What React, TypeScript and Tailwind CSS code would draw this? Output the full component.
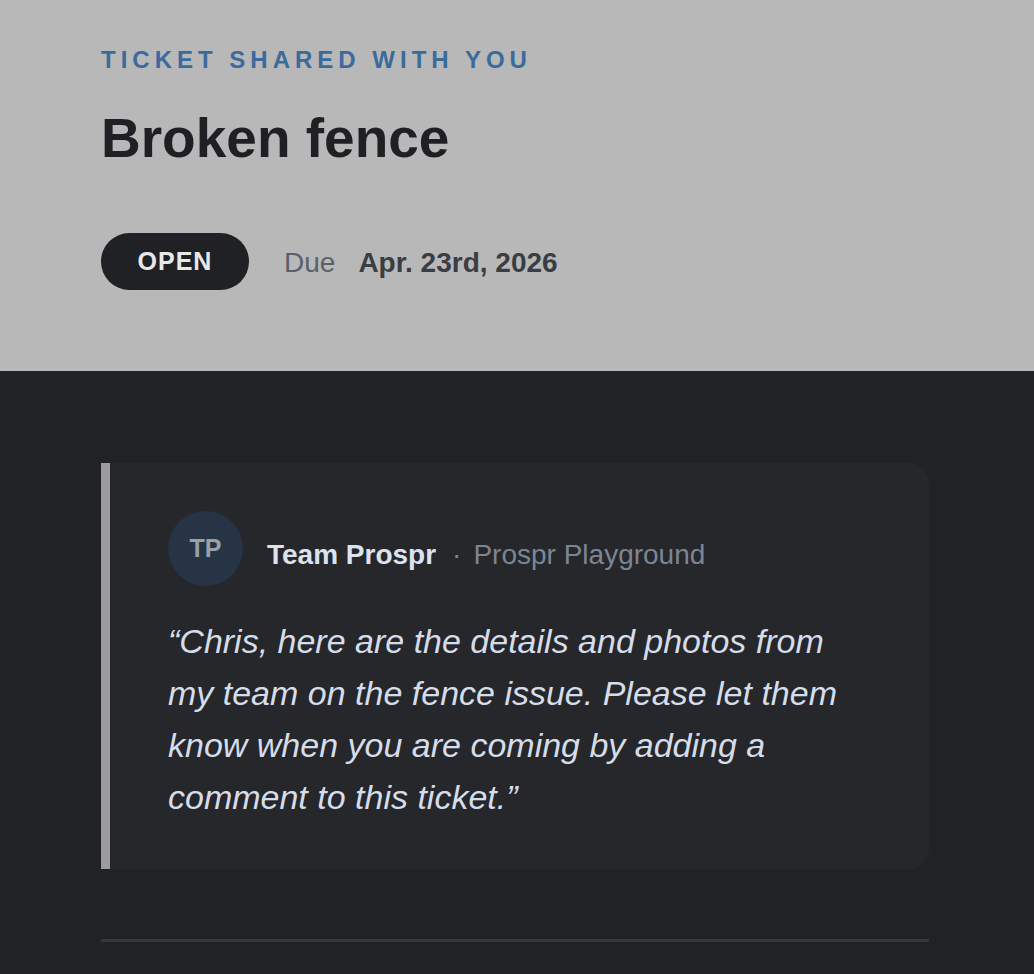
export default function App() {
  return (
    <div className="min-h-screen bg-[#212226] font-['Liberation_Sans',Arial,sans-serif]">
      <header className="h-[371px] bg-[#b8b8b8] px-[101px] pt-[48px]">
        <p className="text-[24px] font-bold leading-none tracking-[5px] text-[#3b6a9c]">TICKET SHARED WITH YOU</p>
        <h1 className="mt-[39px] text-[55px] font-bold leading-none text-[#1f2023]">Broken fence</h1>
        <div className="mt-[67px] flex items-center">
          <span className="flex h-[57px] w-[148px] items-center justify-center rounded-full bg-[#202124] text-[25px] font-bold leading-none tracking-[1px] text-[#e8e8e8]">
            OPEN
          </span>
          <span className="ml-[35px] mt-[3px] text-[28px] leading-none text-[#5a616b]">Due</span>
          <span className="ml-[23px] mt-[3px] text-[28px] font-bold leading-none text-[#3a3d42]">Apr. 23rd, 2026</span>
        </div>
      </header>

      <main className="pl-[101px] pr-[105px] pt-[92px]">
        <div className="rounded-r-[20px] border-l-[9px] border-[#9c9ca0] bg-[#25272b] pb-[46px] pl-[58px] pr-[54px] pt-[48px]">
          <div className="flex items-center">
            <span className="flex h-[75px] w-[75px] shrink-0 items-center justify-center rounded-full bg-[#263445] text-[25px] font-bold leading-none text-[#9aa0a8]">
              TP
            </span>
            <div className="ml-[24px] mt-[13px] flex items-center text-[28px] leading-none">
              <span className="font-bold text-[#dde3ee]">Team Prospr</span>
              <span className="ml-[16px] mr-[12px] text-[#7d8593]">·</span>
              <span className="text-[#7d8593]">Prospr Playground</span>
            </div>
          </div>
          <p className="mt-[29px] text-[34px] italic leading-[52px] text-[#d5dcea]">
            “Chris, here are the details and photos from my team on the fence issue. Please let them know when you are coming by adding a comment to this ticket.”
          </p>
        </div>
        <div className="mt-[70px] h-[3px] bg-[#34373c]" />
      </main>
    </div>
  )
}
